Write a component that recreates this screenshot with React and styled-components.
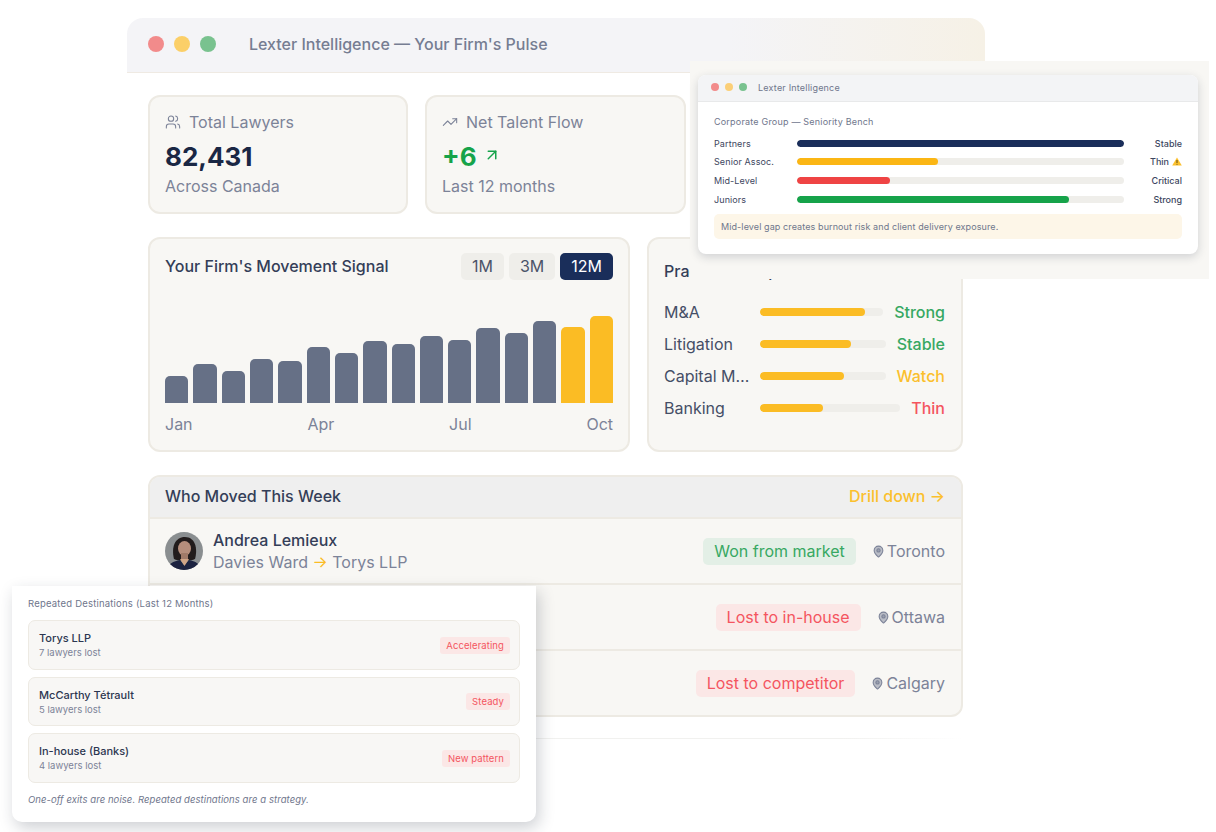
import React from 'react';
import styled, { createGlobalStyle } from 'styled-components';
import { Users, TrendingUp, ArrowUpRight, MapPin } from 'lucide-react';

const BARS = [27, 39, 32, 44, 42, 56, 50, 62, 59, 67, 63, 75, 70, 82, 76, 87];

const PRACTICE = [
	{ name: 'M&A', fill: 85, status: 'Strong', tone: 'green' },
	{ name: 'Litigation', fill: 72, status: 'Stable', tone: 'green' },
	{ name: 'Capital Markets', fill: 67, status: 'Watch', tone: 'amber' },
	{ name: 'Banking', fill: 45, status: 'Thin', tone: 'red' },
];

const BENCH = [
	{ name: 'Partners', fill: 100, color: '#1a2e5a', status: 'Stable' },
	{ name: 'Senior Assoc.', fill: 43, color: '#fbb614', status: 'Thin', warn: true },
	{ name: 'Mid-Level', fill: 28.5, color: '#ef4444', status: 'Critical' },
	{ name: 'Juniors', fill: 83.3, color: '#16a34a', status: 'Strong' },
];

const DESTINATIONS = [
	{ name: 'Torys LLP', lost: '7 lawyers lost', tag: 'Accelerating' },
	{ name: 'McCarthy Tétrault', lost: '5 lawyers lost', tag: 'Steady' },
	{ name: 'In-house (Banks)', lost: '4 lawyers lost', tag: 'New pattern' },
];

const TONES = { green: '#37a862', amber: '#fbbf2d', red: '#f4555f' };

const Avatar = () => (
	<AvatarSvg viewBox="0 0 38 38">
		<defs>
			<filter id="soft">
				<feGaussianBlur stdDeviation="0.6" />
			</filter>
			<clipPath id="round">
				<circle cx="19" cy="19" r="19" />
			</clipPath>
		</defs>
		<g clipPath="url(#round)">
			<rect width="38" height="38" fill="#8a8e90" />
			<g filter="url(#soft)">
				<path d="M9 27C6 15 10 5 20 5s13 11 10 22c-3 2-18 2-21 0z" fill="#211c1c" />
				<ellipse cx="19.5" cy="16.5" rx="6.5" ry="7.5" fill="#b58e7c" />
				<path d="M16 21h7v7h-7z" fill="#a07a68" />
				<path d="M2 38c0-6 7-9 13-10l4 5 5-5c6 1 12 4 12 10z" fill="#1b2340" />
				<path d="M15 27l4.5 7 4.5-7z" fill="#d0a486" />
			</g>
		</g>
	</AvatarSvg>
);

const PlaceIcon = () => <MapPin size={13} strokeWidth={2} fill="#7c839880" />;

const App = () => (
	<>
		<GlobalStyle />
		<Page>
			<Window>
				<TitleBar>
					<Dots>
						<Dot $color="#f28b8b" />
						<Dot $color="#fbcf68" />
						<Dot $color="#79c28f" />
					</Dots>
					<WindowTitle>Lexter Intelligence — Your Firm's Pulse</WindowTitle>
				</TitleBar>
				<Body>
					<StatsRow>
						<Card>
							<StatLabel>
								<Users size={16} strokeWidth={1.6} />
								Total Lawyers
							</StatLabel>
							<StatValue>82,431</StatValue>
							<StatSub>Across Canada</StatSub>
						</Card>
						<Card>
							<StatLabel>
								<TrendingUp size={16} strokeWidth={1.6} />
								Net Talent Flow
							</StatLabel>
							<StatValue $green>
								+6
								<ArrowUpRight size={18} strokeWidth={2} />
							</StatValue>
							<StatSub>Last 12 months</StatSub>
						</Card>
						<Card />
					</StatsRow>

					<ChartsRow>
						<ChartCard>
							<ChartHead>
								<CardTitle>Your Firm's Movement Signal</CardTitle>
								<Ranges>
									<Range>1M</Range>
									<Range>3M</Range>
									<Range $active>12M</Range>
								</Ranges>
							</ChartHead>
							<Bars>
								{BARS.map((h, i) => (
									<Bar key={i} $accent={i > 13} style={{ height: h }} />
								))}
							</Bars>
							<Months>
								<span>Jan</span>
								<span>Apr</span>
								<span>Jul</span>
								<span>Oct</span>
							</Months>
						</ChartCard>
						<PracticeCard>
							<CardTitle>Practice Group Health</CardTitle>
							<PracticeList>
								{PRACTICE.map((p) => (
									<PracticeRow key={p.name}>
										<PracticeName>{p.name}</PracticeName>
										<Track $height={8}>
											<Fill $color="#fbbc24" style={{ width: `${p.fill}%` }} />
										</Track>
										<PracticeStatus $tone={p.tone}>{p.status}</PracticeStatus>
									</PracticeRow>
								))}
							</PracticeList>
						</PracticeCard>
					</ChartsRow>

					<Table>
						<TableHead>
							<CardTitle>Who Moved This Week</CardTitle>
							<DrillLink>Drill down →</DrillLink>
						</TableHead>
						<MoveRow>
							<Person>
								<Avatar />
								<div>
									<PersonName>Andrea Lemieux</PersonName>
									<PersonMove>
										Davies Ward <MoveArrow>→</MoveArrow> Torys LLP
									</PersonMove>
								</div>
							</Person>
							<MoveMeta>
								<Badge $tone="green">Won from market</Badge>
								<Place>
									<PlaceIcon />
									Toronto
								</Place>
							</MoveMeta>
						</MoveRow>
						<MoveRow>
							<span />
							<MoveMeta>
								<Badge $tone="red">Lost to in-house</Badge>
								<Place>
									<PlaceIcon />
									Ottawa
								</Place>
							</MoveMeta>
						</MoveRow>
						<MoveRow>
							<span />
							<MoveMeta>
								<Badge $tone="red">Lost to competitor</Badge>
								<Place>
									<PlaceIcon />
									Calgary
								</Place>
							</MoveMeta>
						</MoveRow>
					</Table>
					<FadeLine />
				</Body>
			</Window>

			<BenchPanel>
				<MiniWindow>
					<MiniBar>
						<MiniDots>
							<MiniDot $color="#f28b8b" />
							<MiniDot $color="#fbcf78" />
							<MiniDot $color="#79c28f" />
						</MiniDots>
						<MiniTitle>Lexter Intelligence</MiniTitle>
					</MiniBar>
					<MiniBody>
						<MiniHeading>Corporate Group — Seniority Bench</MiniHeading>
						<BenchList>
							{BENCH.map((b) => (
								<BenchRow key={b.name}>
									<BenchName>{b.name}</BenchName>
									<Track $height={7}>
										<Fill $color={b.color} style={{ width: `${b.fill}%` }} />
									</Track>
									<BenchStatus>
										{b.status}
										{b.warn && (
											<svg width="10" height="9" viewBox="0 0 10 9">
												<path d="M5 0.4L9.8 8.6H0.2z" fill="#fbc02d" />
												<path d="M5 3v3M5 6.9v0.8" stroke="#4a3d10" strokeWidth="0.9" />
											</svg>
										)}
									</BenchStatus>
								</BenchRow>
							))}
						</BenchList>
						<Note>Mid-level gap creates burnout risk and client delivery exposure.</Note>
					</MiniBody>
				</MiniWindow>
			</BenchPanel>

			<DestinationsPanel>
				<PanelHeading>Repeated Destinations (Last 12 Months)</PanelHeading>
				<DestinationList>
					{DESTINATIONS.map((d) => (
						<Destination key={d.name}>
							<div>
								<DestinationName>{d.name}</DestinationName>
								<DestinationSub>{d.lost}</DestinationSub>
							</div>
							<Tag>{d.tag}</Tag>
						</Destination>
					))}
				</DestinationList>
				<Footnote>One-off exits are noise. Repeated destinations are a strategy.</Footnote>
			</DestinationsPanel>
		</Page>
	</>
);

const GlobalStyle = createGlobalStyle`
	html, body {
		margin: 0;
		background: #fff;
		font-family: Inter, 'Noto Sans', sans-serif;
		-webkit-font-smoothing: antialiased;
	}
	* {
		box-sizing: border-box;
	}
`;

const Page = styled.div`
	position: relative;
	width: 1216px;
	height: 832px;
	padding: 18px 0 0 127px;
	overflow: hidden;
	background: #fff;
`;

const Window = styled.div`
	width: 858px;
`;

const TitleBar = styled.div`
	display: flex;
	align-items: center;
	gap: 33px;
	height: 55px;
	padding: 0 21px 2px;
	border-radius: 16px 16px 0 0;
	border-bottom: 1px solid #efeae3;
	background: linear-gradient(90deg, #f4f4f7 0%, #f4f4f7 70%, #f6f1e6 100%);
`;

const Dots = styled.div`
	display: flex;
	gap: 10px;
`;

const Dot = styled.span`
	width: 16px;
	height: 16px;
	border-radius: 50%;
	background: ${(p) => p.$color};
`;

const WindowTitle = styled.div`
	font-size: 16px;
	font-weight: 500;
	color: #767d92;
`;

const Body = styled.div`
	padding: 22px 22px 0 21px;
	display: flex;
	flex-direction: column;
	gap: 23px;
`;

const StatsRow = styled.div`
	display: grid;
	grid-template-columns: 260px 261px 260px;
	gap: 17px;
	height: 119px;
`;

const Card = styled.div`
	padding: 15px;
	background: #f8f7f4;
	border: 2px solid #edeae3;
	border-radius: 12px;
`;

const StatLabel = styled.div`
	display: flex;
	align-items: center;
	gap: 8px;
	font-size: 16px;
	line-height: 20px;
	color: #7c8398;
`;

const StatValue = styled.div`
	display: flex;
	align-items: center;
	gap: 6px;
	margin-top: 9px;
	font-size: 26px;
	line-height: 32px;
	font-weight: 700;
	color: ${(p) => (p.$green ? '#16a34a' : '#1a2744')};
	svg {
		margin-bottom: 4px;
	}
`;

const StatSub = styled.div`
	margin-top: 2px;
	font-size: 16px;
	line-height: 22px;
	color: #7c8398;
`;

const ChartsRow = styled.div`
	display: grid;
	grid-template-columns: 482px 316px;
	gap: 17px;
	height: 215px;
`;

const ChartCard = styled(Card)`
	padding: 13px 15px 0;
`;

const PracticeCard = styled(Card)`
	padding: 18px 16px 0 15px;
`;

const ChartHead = styled.div`
	display: flex;
	align-items: center;
	justify-content: space-between;
`;

const CardTitle = styled.div`
	font-size: 16px;
	line-height: 28px;
	font-weight: 500;
	color: #343e58;
	white-space: nowrap;
`;

const Ranges = styled.div`
	display: flex;
	gap: 5px;
`;

const Range = styled.span`
	padding: 0 11px;
	height: 27px;
	display: flex;
	align-items: center;
	border-radius: 5px;
	font-size: 16px;
	background: ${(p) => (p.$active ? '#1a2e5a' : '#efeeea')};
	color: ${(p) => (p.$active ? '#fff' : '#4b5369')};
`;

const Bars = styled.div`
	display: flex;
	align-items: flex-end;
	gap: 5px;
	height: 90px;
	margin-top: 33px;
`;

const Bar = styled.div`
	flex: 1;
	border-radius: 5px 5px 0 0;
	background: ${(p) => (p.$accent ? '#fbbc24' : '#667086')};
`;

const Months = styled.div`
	display: flex;
	justify-content: space-between;
	margin-top: 10px;
	font-size: 16px;
	line-height: 22px;
	color: #7c8398;
`;

const PracticeList = styled.div`
	display: flex;
	flex-direction: column;
	gap: 10px;
	margin-top: 16px;
`;

const PracticeRow = styled.div`
	display: flex;
	align-items: center;
	gap: 8px;
	height: 22px;
`;

const PracticeName = styled.span`
	flex: 0 0 88px;
	font-size: 16px;
	color: #454e66;
	white-space: nowrap;
	overflow: hidden;
	text-overflow: ellipsis;
`;

const PracticeStatus = styled.span`
	margin-left: 3px;
	font-size: 16px;
	font-weight: 500;
	color: ${(p) => TONES[p.$tone]};
`;

const Track = styled.div`
	flex: 1;
	height: ${(p) => p.$height}px;
	border-radius: ${(p) => p.$height}px;
	background: #efeeea;
	overflow: hidden;
`;

const Fill = styled.div`
	height: 100%;
	border-radius: inherit;
	background: ${(p) => p.$color};
`;

const Table = styled.div`
	border: 2px solid #edeae3;
	border-radius: 12px;
	background: #f8f7f4;
	overflow: hidden;
`;

const TableHead = styled.div`
	display: flex;
	align-items: center;
	justify-content: space-between;
	height: 40px;
	padding: 0 16px 2px 15px;
	background: #efefef;
`;

const DrillLink = styled.span`
	font-size: 16px;
	font-weight: 500;
	color: #fbc02d;
`;

const MoveRow = styled.div`
	display: flex;
	align-items: center;
	justify-content: space-between;
	height: 66px;
	padding: 0 16px 0 15px;
	border-top: 2px solid #edeae3;
`;

const Person = styled.div`
	display: flex;
	align-items: center;
	gap: 10px;
`;

const AvatarSvg = styled.svg`
	width: 38px;
	height: 38px;
	flex: none;
`;

const PersonName = styled.div`
	font-size: 16px;
	line-height: 22px;
	font-weight: 500;
	color: #343e58;
`;

const PersonMove = styled.div`
	font-size: 16px;
	line-height: 22px;
	color: #7c8398;
`;

const MoveArrow = styled.span`
	color: #fbbc24;
`;

const MoveMeta = styled.div`
	display: flex;
	align-items: center;
	gap: 16px;
`;

const Badge = styled.span`
	height: 27px;
	display: flex;
	align-items: center;
	padding: 0 11px;
	border-radius: 5px;
	font-size: 16px;
	background: ${(p) => (p.$tone === 'green' ? '#e3efe6' : '#fbe7e6')};
	color: ${(p) => TONES[p.$tone]};
`;

const Place = styled.span`
	display: flex;
	align-items: center;
	gap: 2px;
	font-size: 16px;
	color: #7c8398;
`;

const FadeLine = styled.div`
	height: 1px;
	margin-top: -2px;
	background: linear-gradient(90deg, #f1f1ef 0%, #f1f1ef 85%, #fff 100%);
`;

const BenchPanel = styled.div`
	position: absolute;
	left: 690px;
	top: 61px;
	width: 519px;
	height: 218px;
	padding: 14px 11px 0 8px;
	background: #f8f7f4;
`;

const MiniWindow = styled.div`
	height: 179px;
	border-radius: 8px;
	background: #fff;
	overflow: hidden;
	box-shadow: 0 3px 10px rgba(30, 40, 60, 0.18);
`;

const MiniBar = styled.div`
	display: flex;
	align-items: center;
	gap: 11px;
	height: 27px;
	padding: 0 13px 2px;
	background: #f3f4f6;
	border-bottom: 1px solid #e8e9ea;
`;

const MiniDots = styled.div`
	display: flex;
	gap: 6px;
`;

const MiniDot = styled.span`
	width: 8px;
	height: 8px;
	border-radius: 50%;
	background: ${(p) => p.$color};
`;

const MiniTitle = styled.span`
	font-size: 9px;
	color: #6f768c;
	letter-spacing: 0.2px;
`;

const MiniBody = styled.div`
	padding: 14px 16px 0;
`;

const MiniHeading = styled.div`
	font-size: 9px;
	line-height: 12px;
	letter-spacing: 0.2px;
	color: #6f768c;
`;

const PanelHeading = styled(MiniHeading)`
	font-size: 9.5px;
	letter-spacing: 0.2px;
`;

const BenchList = styled.div`
	display: flex;
	flex-direction: column;
	gap: 6.7px;
	margin-top: 9px;
`;

const BenchRow = styled.div`
	display: grid;
	grid-template-columns: 83px 327px 58px;
	align-items: center;
	height: 12px;
`;

const BenchName = styled.span`
	font-size: 9px;
	letter-spacing: 0.1px;
	color: #3d4660;
`;

const BenchStatus = styled.span`
	display: flex;
	align-items: center;
	justify-content: flex-end;
	gap: 3px;
	font-size: 9px;
	font-weight: 500;
	color: #3d4660;
`;

const Note = styled.div`
	display: flex;
	align-items: center;
	height: 25px;
	margin-top: 9px;
	padding: 0 7px;
	border-radius: 5px;
	background: #fdf6e8;
	font-size: 9px;
	letter-spacing: 0.1px;
	color: #6f768c;
`;

const DestinationsPanel = styled.div`
	position: absolute;
	left: 12px;
	top: 586px;
	width: 524px;
	height: 236px;
	padding: 12px 16px 0;
	border-radius: 0 0 10px 10px;
	background: #fff;
	box-shadow: 3px 6px 16px rgba(30, 40, 60, 0.22);
`;

const DestinationList = styled.div`
	display: flex;
	flex-direction: column;
	gap: 7px;
	margin-top: 10px;
`;

const Destination = styled.div`
	display: flex;
	align-items: center;
	justify-content: space-between;
	height: 49.5px;
	padding: 1px 9px 0 10px;
	border: 1px solid #edeae3;
	border-radius: 7px;
	background: #f8f7f5;
`;

const DestinationName = styled.div`
	font-size: 11px;
	line-height: 15px;
	font-weight: 500;
	color: #2c3650;
`;

const DestinationSub = styled.div`
	font-size: 9.5px;
	line-height: 13px;
	color: #7c8398;
`;

const Tag = styled.span`
	height: 17px;
	display: flex;
	align-items: center;
	padding: 0 6px;
	border-radius: 3px;
	background: #fbe7e6;
	font-size: 9.5px;
	letter-spacing: 0.1px;
	color: #f4555f;
`;

const Footnote = styled.div`
	margin-top: 10px;
	font-size: 9.5px;
	line-height: 13px;
	font-style: italic;
	letter-spacing: 0.07px;
	color: #6f768c;
`;

export default App;
